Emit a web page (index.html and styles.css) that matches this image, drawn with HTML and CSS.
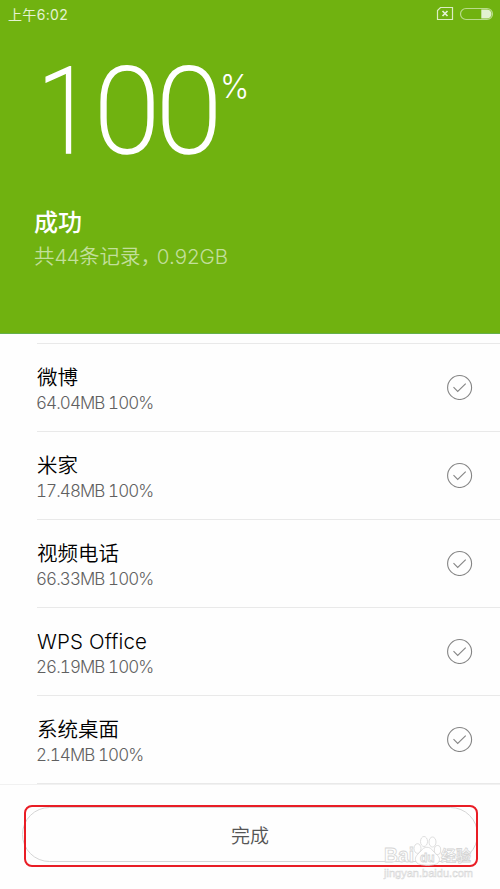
FILE: index.html
```
<!DOCTYPE html>
<html lang="zh-CN">
<head>
<meta charset="utf-8">
<title>成功</title>
<link rel="stylesheet" href="styles.css">
</head>
<body>
<svg class="defs" width="0" height="0"><symbol id="check" viewBox="0 0 26 26"><circle cx="12.6" cy="13.5" r="12"/><path d="M6.5 13.2l4.200 4.200 8-7.800"/></symbol></svg>
<header class="hero">
  <div class="status"><span class="time">上午6:02</span>
    <svg class="indicators" width="58" height="16" viewBox="0 0 58 16">
      <path d="M4.500 1.500H16.500V13.500H1.500V4.500Z" fill="none" stroke="#dcedc4" stroke-width="1.2"/>
      <path d="M6.500 5l5 5m0-5l-5 5" stroke="#e6f3d5" stroke-width="1.7"/>
      <rect x="24.500" y="2.500" width="32" height="11" rx="5.500" fill="none" stroke="#b9dc8b" stroke-width="1.2"/>
      <path d="M45.300 3.500H51a4.500 4.500 0 0 1 0 9h-5.700Z" fill="#e2f1d0"/>
    </svg>
  </div>
  <div class="percent"><span class="number"><span class="one">1</span><span class="zero">0</span><span class="zero">0</span></span><span class="sign">%</span></div>
  <h1>成功</h1>
  <p class="summary">共<span class="count">44</span>条记录<span class="comma">，</span><span class="size">0.92GB</span></p>
</header>
<main>
  <section class="row"><div><h2>微博</h2><p>64.04MB 100%</p></div><svg class="check"><use href="#check"/></svg></section>
  <section class="row"><div><h2>米家</h2><p>17.48MB 100%</p></div><svg class="check"><use href="#check"/></svg></section>
  <section class="row"><div><h2>视频电话</h2><p>66.33MB 100%</p></div><svg class="check"><use href="#check"/></svg></section>
  <section class="row"><div><h2 class="latin">WPS Office</h2><p>26.19MB 100%</p></div><svg class="check"><use href="#check"/></svg></section>
  <section class="row"><div><h2>系统桌面</h2><p>2.14MB 100%</p></div><svg class="check"><use href="#check"/></svg></section>
</main>
<footer>
  <button>完成</button>
  <div class="highlight"></div>
  <svg class="watermark" width="100" height="50" viewBox="0 0 100 50">
    <g class="mark">
      <text x="1" y="29" font-size="20" textLength="30" lengthAdjust="spacingAndGlyphs">Bai</text>
      <path d="M34 30c-4-5 0-8 4-12 3-5 9-5 12 0 4 4 9 7 5 12-3 3-18 3-21 0Z"/>
      <ellipse cx="34.500" cy="15.500" rx="3.500" ry="4.800"/><ellipse cx="41" cy="8.500" rx="3.500" ry="5"/><ellipse cx="49.500" cy="9" rx="3.500" ry="5"/><ellipse cx="54.500" cy="17" rx="3.200" ry="4.500"/>
      <text x="37" y="29" font-size="12" class="du">du</text>
      <text x="58" y="28" font-size="15" textLength="30" class="cn">经验</text>
      <text x="1" y="44" font-size="10.500" textLength="89" lengthAdjust="spacingAndGlyphs" class="url">jingyan.baidu.com</text>
    </g>
  </svg>
</footer>
</body>
</html>
```
FILE: styles.css
```
* { box-sizing: border-box; margin: 0; padding: 0; }
body { width: 500px; height: 889px; overflow: hidden; background: #fefefe; font-family: Inter, "Noto Sans CJK SC", sans-serif; }
.defs { position: absolute; }
.hero { height: 334px; background: #70b210; color: #fff; border-bottom: 1px solid #65b04b; overflow: hidden; }
.status { height: 28px; padding: 0 6px 0 8px; display: flex; justify-content: space-between; align-items: center; }
.time { font-size: 14px; line-height: 28px; padding-top: 1px; color: #e4f2d2; font-weight: 400; letter-spacing: .35px; }
.indicators { display: block; }
.percent { display: flex; height: 179px; padding-left: 37px; align-items: flex-start; font-family: Roboto, sans-serif; }
.number { display: flex; width: 183px; font-size: 120px; line-height: 168px; font-weight: 200; -webkit-text-stroke: 1.5px #fff; }
.one { width: 57px; transform: scaleX(.85); transform-origin: left; }
.zero { width: 62px; flex: none; }
.sign { font: 300 33px/60px Inter, sans-serif; margin-top: 28px; transform: scaleX(.95); transform-origin: left; }
h1 { font-size: 24px; line-height: 32px; font-weight: 500; margin-left: 34px; }
.summary { font-size: 20.500px; line-height: 36px; margin-left: 34px; font-weight: 350; color: #c2df9b; white-space: nowrap; }
.count { letter-spacing: -.6px; }
.comma { font-feature-settings: "halt"; margin-right: 6px; }
.size { font-weight: 300; }
.row { height: 88px; margin-left: 37px; border-bottom: 1px solid #e9e9e9; display: flex; justify-content: space-between; padding: 19px 27px 0 0; }
.row:first-child { margin-top: 9px; height: 89px; border-top: 1px solid #e9e9e9; }
.row h2 { font-size: 20.500px; line-height: 30px; font-weight: 350; color: #000; }
.row .latin { letter-spacing: .15px; }
.row p { font-size: 17px; line-height: 22px; margin: -1px 0 0 -1px; font-weight: 300; color: #606060; letter-spacing: -.92px; font-feature-settings: "tnum"; }
.check { width: 26px; height: 26px; margin-top: 11px; fill: none; stroke: #858585; stroke-width: 1.1; }
footer { position: relative; height: 105px; border-top: 1px solid #f1f1f1; padding: 22px 22px 0; }
button { display: block; width: 456px; height: 55px; border: 1px solid #d5d5d5; border-radius: 28px; background: #fefefe; font: 350 19px/53px "Noto Sans CJK SC", sans-serif; color: #555; }
.highlight { position: absolute; left: 24px; top: 20px; width: 454px; height: 62px; border: 2px solid #e91d25; border-radius: 8px; }
.watermark { position: absolute; left: 383px; top: 48px; }
.mark { fill: #fff; stroke: #d5d5d5; stroke-width: .8; font-family: "Liberation Sans", sans-serif; font-weight: 700; }
.cn { font-family: "Noto Sans CJK SC", sans-serif; }
.url { stroke-width: .5; font-weight: 400; }
```
